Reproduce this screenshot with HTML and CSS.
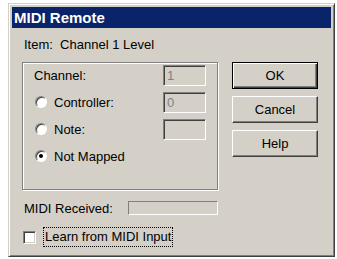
FILE: index.html
```html
<!DOCTYPE html>
<html lang="en">
<head>
    <title>MIDI Remote</title>
    <link rel="stylesheet" href="styles.css">
</head>
<body>
<div class="window">
    <div class="titlebar">MIDI Remote</div>
    <div class="client">
        <div class="item">Item:&nbsp; Channel 1 Level</div>
        <div class="main">
            <div class="group">
                <div class="row">
                    <span class="label">Channel:</span>
                    <span class="field disabled">1</span>
                </div>
                <div class="row">
                    <span class="radio"></span>
                    <span class="label">Controller:</span>
                    <span class="field disabled">0</span>
                </div>
                <div class="row">
                    <span class="radio"></span>
                    <span class="label">Note:</span>
                    <span class="field"></span>
                </div>
                <div class="row">
                    <span class="radio checked"></span>
                    <span class="label">Not Mapped</span>
                </div>
            </div>
            <div class="buttons">
                <button class="btn default">OK</button>
                <button class="btn">Cancel</button>
                <button class="btn">Help</button>
            </div>
        </div>
        <div class="received">
            <span class="received-label">MIDI Received:</span>
            <span class="meter"></span>
        </div>
        <div class="learn">
            <span class="checkbox"></span>
            <span class="focus">Learn from MIDI Input</span>
        </div>
    </div>
</div>
</body>
</html>
```

FILE: styles.css
```css
body, html {
    margin: 0;
    background: #fff;
    font-family: "Liberation Sans", Arial, sans-serif;
    font-size: 13px;
    color: #000;
}

.window {
    margin: 3px 0 0 8px;
    width: 327px;
    height: 254px;
    box-sizing: border-box;
    background: #d4d0c8;
    border: 1px solid;
    border-color: #d4d0c8 #404040 #404040 #d4d0c8;
    box-shadow: inset 1px 1px #fff, inset -1px -1px #808080;
    padding: 3px;
}

.titlebar {
    height: 21px;
    line-height: 21px;
    background: #0a246a;
    color: #fff;
    font-weight: bold;
    font-size: 15px;
    padding-left: 2px;
}

.item {
    margin: 9px 0 0 12px;
    line-height: 16px;
}

.main {
    display: flex;
    margin-top: 9px;
}

.group {
    margin-left: 10px;
    width: 196px;
    height: 128px;
    box-sizing: border-box;
    border: 1px solid #808080;
    box-shadow: inset 1px 1px #fff, 1px 1px #fff;
    padding: 1px 11px 0 11px;
    display: flex;
    flex-direction: column;
    gap: 5px;
}

.row {
    display: flex;
    align-items: center;
    height: 22px;
}

.row .label {
    flex: 1;
}

.radio {
    width: 12px;
    height: 12px;
    box-sizing: border-box;
    border-radius: 50%;
    background: #fff;
    border: 1px solid;
    border-color: #808080 #fff #fff #808080;
    box-shadow: inset 1px 1px #404040;
    margin: 0 7px 0 1px;
    position: relative;
}

.radio.checked::after {
    content: "";
    position: absolute;
    left: 3px;
    top: 3px;
    width: 4px;
    height: 4px;
    border-radius: 50%;
    background: #000;
}

.field {
    width: 43px;
    height: 21px;
    box-sizing: border-box;
    border: 1px solid;
    border-color: #808080 #fff #fff #808080;
    box-shadow: inset 1px 1px #404040;
    padding: 2px 0 0 3px;
    line-height: 16px;
}

.field.disabled {
    color: #808080;
}

.buttons {
    margin-left: 14px;
    display: flex;
    flex-direction: column;
    gap: 7px;
}

.btn {
    width: 86px;
    height: 27px;
    background: #d4d0c8;
    font-family: "Liberation Sans", Arial, sans-serif;
    font-size: 13px;
    color: #000;
    border: 1px solid;
    border-color: #fff #404040 #404040 #fff;
    box-shadow: inset -1px -1px #808080;
    padding: 0;
}

.btn.default {
    border: 1px solid #000;
    box-shadow: inset 1px 1px #fff, inset -1px -1px #404040, inset -2px -2px #808080;
}

.received {
    display: flex;
    align-items: center;
    height: 16px;
    margin: 10px 0 0 12px;
}

.received-label {
    width: 104px;
}

.meter {
    width: 90px;
    height: 14px;
    box-sizing: border-box;
    border: 1px solid;
    border-color: #808080 #fff #fff #808080;
}

.learn {
    display: flex;
    align-items: center;
    height: 20px;
    margin: 11px 0 0 11px;
}

.checkbox {
    width: 13px;
    height: 13px;
    box-sizing: border-box;
    background: #fff;
    border: 1px solid;
    border-color: #808080 #fff #fff #808080;
    box-shadow: inset 1px 1px #404040, inset -1px -1px #d4d0c8;
    margin-right: 7px;
}

.focus {
    border: 1px dotted #000;
    padding: 1px 1px;
    line-height: 16px;
}
```
